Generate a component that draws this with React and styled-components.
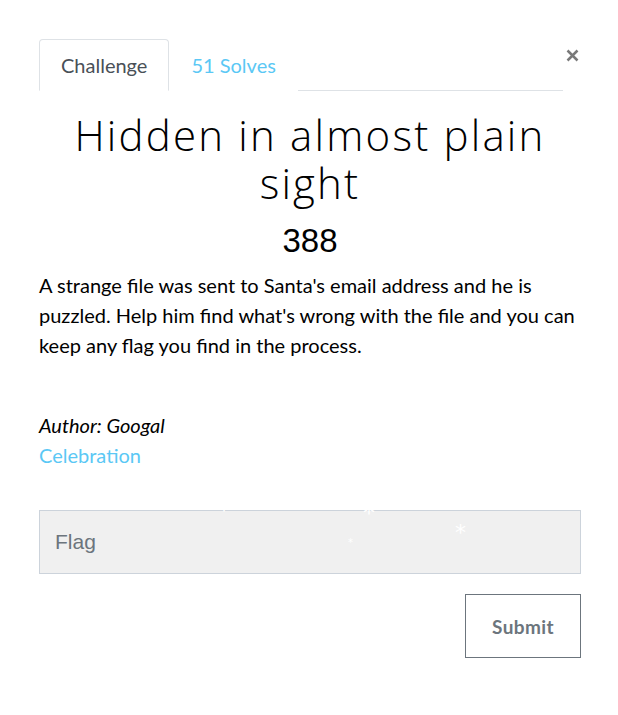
import React from "react";
import styled, { createGlobalStyle } from "styled-components";

const Global = createGlobalStyle`
  html, body { margin: 0; padding: 0; background: #fff; }
  body { font-family: Lato, "Noto Sans", sans-serif; }
  * { box-sizing: border-box; }
`;

const Modal = styled.div`
  position: relative;
  width: 618px;
  height: 715px;
  padding: 39px 37px 0 39px;
  background: #fff;
`;

const Header = styled.div`
  display: flex;
  align-items: flex-start;
`;

const TabList = styled.div`
  flex: 1;
  display: flex;
  border-bottom: 1px solid #dee2e6;
`;

const Tab = styled.div`
  height: 52px;
  padding: 0 21px;
  display: flex;
  align-items: center;
  font-size: 20px;
  margin-bottom: -1px;
  color: ${(p) => (p.$active ? "#495057" : "#5bc8f5")};
  background: #fff;
  border: 1px solid ${(p) => (p.$active ? "#dee2e6" : "transparent")};
  border-bottom-color: ${(p) => (p.$active ? "#fff" : "transparent")};
  border-radius: 4px 4px 0 0;
`;

const Close = styled.button`
  width: 18px;
  margin-top: 10px;
  padding: 0;
  border: 0;
  background: none;
  display: flex;
  justify-content: center;
  color: #7a7a7a;
`;

const Title = styled.h2`
  margin: 20px 0 0;
  text-align: center;
  font-family: "Open Sans", sans-serif;
  font-weight: 300;
  font-size: 42px;
  line-height: 48px;
  letter-spacing: 2.2px;
  color: #000;
`;

const Value = styled.h3`
  margin: 14px 0 0;
  text-align: center;
  font-family: "Liberation Sans", Arial, sans-serif;
  font-weight: 400;
  font-size: 33px;
  line-height: 40px;
  color: #000;
`;

const Description = styled.p`
  margin: 9px 0 0;
  font-size: 20px;
  line-height: 30px;
  color: #000;
`;

const Author = styled.p`
  margin: 50px 0 0;
  font-size: 20px;
  line-height: 30px;
  font-style: italic;
  color: #000;
`;

const Category = styled.div`
  font-size: 20px;
  line-height: 30px;
  color: #5bc8f5;
`;

const FlagInput = styled.input`
  display: block;
  width: 100%;
  height: 64px;
  margin-top: 40px;
  padding: 0 15px;
  background: #f0f0f0;
  border: 1px solid #ccd3db;
  border-radius: 0;
  font-family: "Liberation Sans", Arial, sans-serif;
  font-size: 21px;
  color: #333;
  outline: none;
  &::placeholder { color: #6c757d; }
`;

const Actions = styled.div`
  display: flex;
  justify-content: flex-end;
  margin-top: 20px;
`;

const SubmitButton = styled.button`
  width: 116px;
  height: 64px;
  background: #fff;
  border: 1px solid #6c757d;
  border-radius: 0;
  font-family: Lato, sans-serif;
  font-weight: 700;
  font-size: 19px;
  letter-spacing: 0.4px;
  color: #6c757d;
`;

const Flake = styled.span`
  position: absolute;
  color: #fff;
  font-family: "DejaVu Sans", sans-serif;
  font-size: ${(p) => p.$size}px;
  line-height: 1;
  pointer-events: none;
`;

const flakes = [
  { x: 218, y: 498, s: 24 },
  { x: 363, y: 501, s: 24 },
  { x: 455, y: 522, s: 22 },
  { x: 348, y: 538, s: 10 },
];

export default function App() {
  return (
    <>
      <Global />
      <Modal>
        <Header>
          <TabList>
            <Tab $active>Challenge</Tab>
            <Tab>51 Solves</Tab>
          </TabList>
          <Close aria-label="Close">
            <svg width="13" height="13" viewBox="0 0 13 13">
              <path d="M1.5 1.5 L11.5 11.5 M11.5 1.5 L1.5 11.5" stroke="currentColor" strokeWidth="2.5" />
            </svg>
          </Close>
        </Header>
        <Title>Hidden in almost plain sight</Title>
        <Value>388</Value>
        <Description>
          A strange file was sent to Santa's email address and he is puzzled. Help him find what's wrong with the file and you can keep any flag you find in the process.
        </Description>
        <Author>Author: Googal</Author>
        <Category>Celebration</Category>
        <FlagInput placeholder="Flag" />
        <Actions>
          <SubmitButton>Submit</SubmitButton>
        </Actions>
        {flakes.map((f, i) => (
          <Flake key={i} $size={f.s} style={{ left: f.x, top: f.y }}>*</Flake>
        ))}
      </Modal>
    </>
  );
}
